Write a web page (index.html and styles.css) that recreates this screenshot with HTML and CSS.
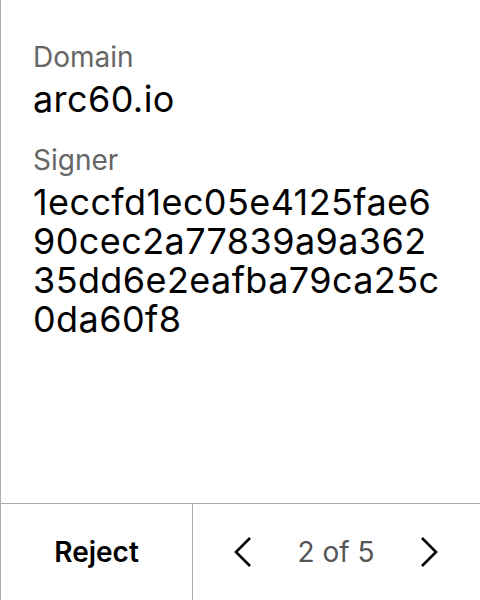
FILE: index.html
```html
<!DOCTYPE html>
<html>
<head>
<meta charset="utf-8">
<link rel="stylesheet" href="styles.css">
</head>
<body>
<div class="screen">
  <div class="content">
    <div class="field">
      <div class="label">Domain</div>
      <div class="value">arc60.io</div>
    </div>
    <div class="field">
      <div class="label">Signer</div>
      <div class="value hex">1eccfd1ec05e4125fae690cec2a77839a9a36235dd6e2eafba79ca25c0da60f8</div>
    </div>
  </div>
  <div class="footer">
    <div class="reject">Reject</div>
    <div class="pager">
      <svg class="chev" width="20" height="32" viewBox="0 0 20 32"><path d="M17 2 L3 16 L17 30" fill="none" stroke="#000" stroke-width="2.6"/></svg>
      <span class="count">2 of 5</span>
      <svg class="chev" width="20" height="32" viewBox="0 0 20 32"><path d="M3 2 L17 16 L3 30" fill="none" stroke="#000" stroke-width="2.6"/></svg>
    </div>
  </div>
</div>
</body>
</html>
```
FILE: styles.css
```css
html, body {
  margin: 0;
  padding: 0;
  background: #fff;
}
body {
  font-family: Inter, "Noto Sans", sans-serif;
  color: #000;
}
.screen {
  width: 480px;
  height: 600px;
  box-sizing: border-box;
  border-left: 1px solid #aaa;
  display: flex;
  flex-direction: column;
}
.content {
  flex: 1;
  padding: 40px 32px 0 32px;
  display: flex;
  flex-direction: column;
  gap: 24px;
}
.label {
  font-size: 28px;
  line-height: 34px;
  color: #666;
}
.value {
  font-size: 36px;
  line-height: 39px;
  letter-spacing: 0.4px;
  margin-top: 6px;
}
.hex {
  width: 408px;
  word-break: break-all;
}
.footer {
  height: 96px;
  border-top: 1px solid #aaa;
  display: flex;
}
.reject {
  width: 191px;
  border-right: 1px solid #aaa;
  display: flex;
  align-items: center;
  justify-content: center;
  font-size: 28px;
  font-weight: 600;
}
.pager {
  flex: 1;
  display: flex;
  align-items: center;
  justify-content: space-between;
  padding: 0 41px 0 40px;
}
.count {
  font-size: 28px;
  color: #555;
}
```
